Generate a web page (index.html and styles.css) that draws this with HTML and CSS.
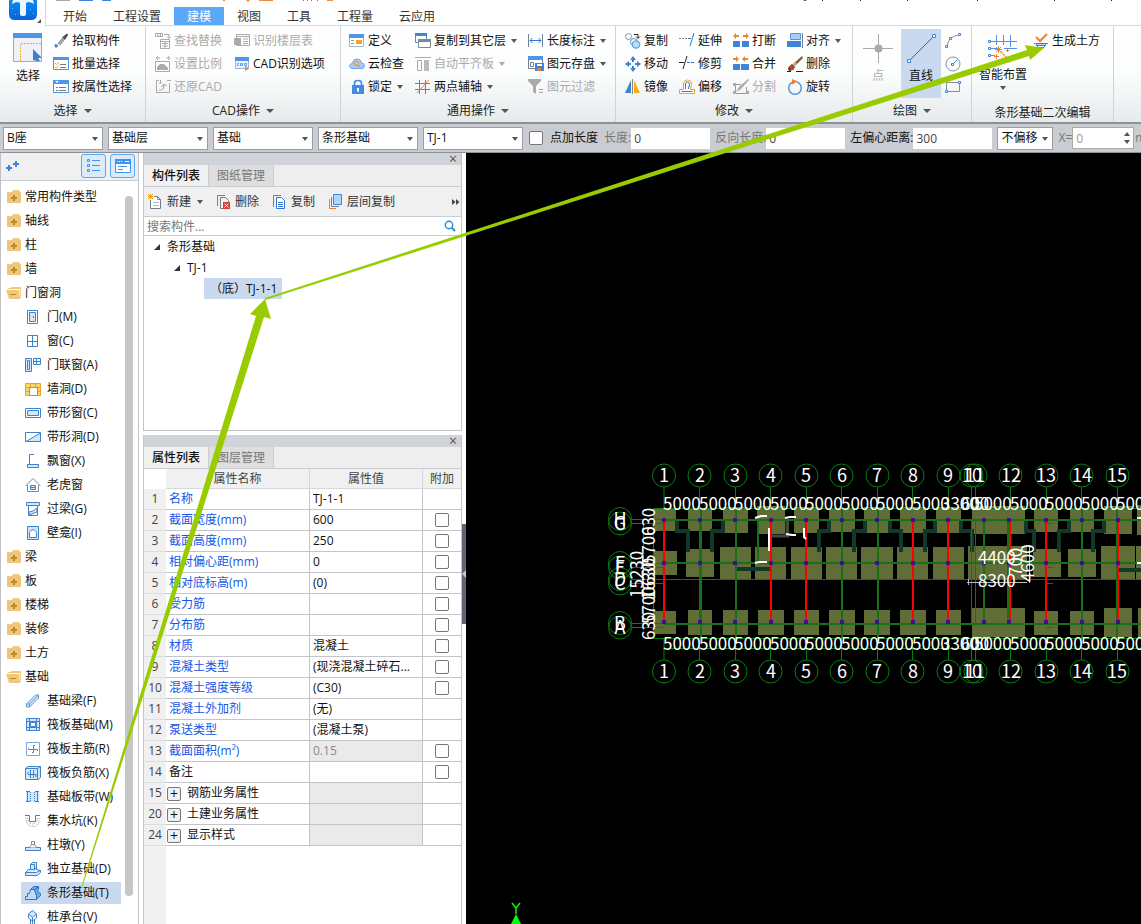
FILE: index.html
```html
<!DOCTYPE html>
<html lang="zh-CN">
<head>
<meta charset="utf-8">
<title>条形基础 - 建模</title>
<link rel="stylesheet" href="styles.css">
</head>
<body>
<svg class="defs" aria-hidden="true">
  <symbol id="folder" viewBox="0 0 16 14"><path fill="#f0c57c" d="M7 0h6v1H7zM1 2h14v11H1zM6 1h8v1H6z"/><path fill="#b98a34" d="M7 5h2v2h2v2H9v2H7V9H5V7h2z"/></symbol>
  <symbol id="folder-open" viewBox="0 0 16 14"><path fill="#f0c57c" d="M5 1h10v11h-1V3H5zM0 4h13l1 9H3z"/><path fill="#f0c57c" d="M2 2h12v1H2z"/><path fill="#b98a34" d="M4 8h6v1H4z"/></symbol>
</svg>

<header class="top">
  <div class="logo">
    <svg width="44" height="25" viewBox="0 0 44 25"><defs><linearGradient id="lg" x2="0" y2="1"><stop stop-color="#0b8cf0"/><stop offset="1" stop-color="#0a63d8"/></linearGradient></defs><path fill="url(#lg)" d="M9 0h28v14q0 6-6 6H15q-6 0-6-6z"/><path fill="#e8f6ff" d="M13 0h20l1 4q-3-2-6-2l-2 1v11q0 2-3 2t-3-2V3l-2-1q-3 0-6 2z"/><path fill="#6cc4ff" d="M12 8h1v1h-1zM30 9h1v1h-1zM33 13h1v1h-1zM15 14h1v1h-1z"/><path fill="#555" d="M41 19v4h-4z"/></svg>
  </div>
  <div class="top-main">
    <svg class="quick" width="1096" height="3" viewBox="45 0 1096 3"><path fill="#aaa" d="M55 0h14v1H55z"/><path fill="#3d86dc" d="M78 0h14v1H78zM101 0h9v1h-9zM302 0h1v1h-1zM306 0h1v1h-1zM310 0h1v1h-1zM316 0h1v1h-1z"/><path fill="#f08a3c" d="M222 0h2v1h-2zM245 0h4l-2 2zM258 0h14v1H258zM326 0h6v1h-6z"/><path fill="#302040" d="M802 0h4l-2 1zM821 0h1v1h-1zM859 0h1v1h-1zM906 0h1v1h-1zM976 0h1v1h-1zM1053 0h1v1h-1zM1110 0h1v1h-1z"/></svg>
    <nav class="tabs">
      <a href="#">开始</a><a href="#">工程设置</a><a href="#" class="on">建模</a><a href="#">视图</a><a href="#">工具</a><a href="#">工程量</a><a href="#">云应用</a>
    </nav>
  </div>
</header>

<section class="ribbon">
  <div class="group g-select">
    <div class="body">
      <button class="big"><svg width="32" height="32" viewBox="0 0 32 32"><path fill="#eef1f6" stroke="#94aed0" d="M1.500 2.500h28v27h-28z"/><path fill="#4f94e6" d="M1 1h29v5H1z"/><path fill="none" stroke="#f5b02a" stroke-dasharray="2 1" d="M8.500 29V11.500H29"/><path fill="#3a7fd2" d="M21 17l9 9h-4l2 3h-3l-4-1z"/></svg><span>选择</span></button>
      <div class="col">
        <button><svg viewBox="0 0 16 16"><path fill="#4a4a4a" d="M9 4l2-1 2-2q2-1 2 1l-2 3-1 2z"/><path fill="none" stroke="#8a8f95" stroke-width="1.300" d="M10 5l-5 6M11.500 6l-5 6"/><path fill="#3a7fd2" d="M2 11q4 1 3 2-2 3-3 1-1-1 0-3z"/></svg>拾取构件</button>
        <button><svg viewBox="0 0 16 16"><path fill="#fff" stroke="#5b8fcd" d="M.5 2.500h15v11H.5z"/><path fill="#4f94e6" d="M0 1h16v3H0z"/><path fill="none" stroke="#f0962e" d="M2 7l1.500 1.500L6 6M2 11l1.500 1L6 9.500"/><path stroke="#777" d="M7 8.500h6M7 11.500h6"/></svg>批量选择</button>
        <button><svg viewBox="0 0 16 16"><path fill="#fff" stroke="#5b8fcd" d="M.5 2.500h15v11H.5z"/><path fill="#4f94e6" d="M0 1h16v4H0z"/><path fill="#fff" d="M2 2h4L4 4z"/><path stroke="#777" d="M3 8.500h2M6 8.500h7M3 11.500h2M6 11.500h7"/></svg>按属性选择</button>
      </div>
    </div>
    <div class="cap">选择<i class="tri"></i></div>
  </div>

  <div class="group g-cad">
    <div class="body">
      <div class="col">
        <button disabled><svg viewBox="0 0 16 16"><path fill="none" stroke="#aaa" d="M.5.500h7v3h-7zM3 0v3M5.500 0v3M9 1.500h5V5M12 3.500l2 2 2-2M5.500 6.500h9v9h-9zM5 8.500h10M7 10.500h6M7 13h6M10 9v6"/></svg>查找替换</button>
        <button disabled><svg viewBox="0 0 16 16"><path fill="none" stroke="#aaa" d="M.5 5.500h14v10H.5zM1 2h4M11 2h4M3 0L1 2l2 2M13 0l2 2-2 2"/><path fill="#aaa" d="M2 14V11l3-3h4l4 4v2z"/></svg>设置比例</button>
        <button disabled><svg viewBox="0 0 16 16"><path fill="none" stroke="#aaa" d="M4 1.500H1.500V13.500H14.500V4M16 1.500H12M5.500 1v3M4 4h3M8.500 10V6M4 11q5 1 5-5M6 8l3-3 3 2"/></svg>还原CAD</button>
      </div>
      <div class="col">
        <button disabled><svg viewBox="0 0 16 16"><path fill="none" stroke="#aaa" d="M2.500 1.500h13v11h-13zM2.500 3.500h13M9 6h5M9 8.500h5M9 10.500h5"/><path fill="#aaa" d="M0 5h7v7H0z"/></svg>识别楼层表</button>
        <button><svg viewBox="0 0 16 16"><path fill="#eaf3ff" stroke="#8db9ee" d="M1.500 2.500h13v10h-13z"/><path fill="#4f94e6" d="M1 1h14v4H1z"/><path fill="none" stroke="#6a9fe0" d="M5 7.500H3.500v2H5M6.500 10V7.500h2V10M6 9h2M10.500 7v2.500h2v-2h-2"/><path fill="#f08a4c" d="M11 9l4 4-2 1-2 1z"/></svg>CAD识别选项</button>
      </div>
    </div>
    <div class="cap">CAD操作<i class="tri"></i></div>
  </div>

  <div class="group g-common">
    <div class="body">
      <div class="col">
        <button><svg viewBox="0 0 16 16"><path fill="#fff" stroke="#aeb4bc" d="M.5 1.500h14v12H.5z"/><path fill="#4f94e6" d="M0 1h15v4H0z"/><path fill="#f5a524" d="M7 7h6v4H7z"/><path stroke="#999" d="M2 7.500h3M2 10.500h3"/></svg>定义</button>
        <button><svg viewBox="0 0 16 16"><path fill="#a9ccf5" stroke="#6fa6e6" d="M3 12.500q-2.500-.5-2.500-3 .5-2 3-2Q4 3 8 3t4.500 4q3 0 3 3 0 2-2.500 2.500z"/><circle cx="7.500" cy="7.500" r="2" fill="#f7c7a5" stroke="#e08040"/><path stroke="#e08040" d="M9 9l2 2"/></svg>云检查</button>
        <button><svg viewBox="0 0 16 16"><path fill="#3f8be6" d="M3 6h12v9H3z"/><path fill="none" stroke="#3f8be6" stroke-width="1.600" d="M5.500 7V4q0-2.500 3.500-2.500T12.500 4v3"/><path fill="#fff" d="M8 9h2v2l-.5 2h-1L8 11z"/></svg>锁定<i class="tri"></i></button>
      </div>
      <div class="col">
        <button><svg viewBox="0 0 16 16"><path fill="#fff" stroke="#4f8fdc" d="M.5 1.500h11v8H.5z"/><path fill="#3f84d8" d="M0 0h12v3H0z"/><path fill="#fff" stroke="#7c8894" d="M3.500 6.500h12v8h-12z"/><path fill="#7c8894" d="M3 6h13v3H3z"/></svg>复制到其它层<i class="tri"></i></button>
        <button disabled><svg viewBox="0 0 16 16"><path fill="none" stroke="#aaa" d="M0 1.500h16M2.500 4.500h4v10h-4z"/><path fill="#bbb" d="M9 4h5v11H9z"/></svg>自动平齐板<i class="tri"></i></button>
        <button><svg viewBox="0 0 16 16"><path fill="none" stroke="#70808f" d="M4.500 1v14M10.500 1v14M0 4.500h15M0 10.500h15"/><path stroke="#ee7f31" d="M2 14L14 1"/></svg>两点辅轴<i class="tri"></i></button>
      </div>
      <div class="col">
        <button><svg viewBox="0 0 16 16"><path fill="none" stroke="#70808f" d="M.5 1v13M14.500 1v13"/><path fill="none" stroke="#2f76d2" d="M2 7.500h11M4.500 5L2 7.500 4.500 10M10.500 5L13 7.500 10.500 10"/></svg>长度标注<i class="tri"></i></button>
        <button><svg viewBox="0 0 16 16"><path fill="#fff" stroke="#70808f" d="M.5 1.500h14v11H.5z"/><path fill="#4f94e6" d="M0 0h15v4H0z"/><path fill="none" stroke="#70808f" d="M2.500 6.500h3v4h-3z"/><path fill="#3f84d8" d="M7 7h9v8H7z"/><path fill="#fff" d="M9 8h5v2H9z"/><path fill="#ee7f31" d="M9 12h4v3H9z"/></svg>图元存盘<i class="tri"></i></button>
        <button disabled><svg viewBox="0 0 16 16"><path fill="#aaa" d="M0 0h13v2L8 7v8l-3-2V7L0 2zM11 10h4v1h-4zM11 13h4v1h-4z"/></svg>图元过滤</button>
      </div>
    </div>
    <div class="cap">通用操作<i class="tri"></i></div>
  </div>

  <div class="group g-edit">
    <div class="body">
      <div class="col">
        <button><svg viewBox="0 0 16 16"><circle cx="3.500" cy="3.500" r="3" fill="#fff" stroke="#8a9096"/><circle cx="9" cy="9" r="3.500" fill="#fff" stroke="#4f94d8"/><circle cx="11" cy="11.500" r="3.800" fill="#b9dbfa" stroke="#4f94d8"/><path fill="none" stroke="#222" d="M9 1.500h4V5M11 3.500l2 2 2-2"/></svg>复制</button>
        <button><svg viewBox="0 0 16 16"><path fill="#3c83d4" d="M8 0l3 4H9v2H7V4H5zM8 16l3-4H9v-2H7v2H5zM0 8l4-3v2h2v2H4v2zM16 8l-4-3v2h-2v2h2v2z"/></svg>移动</button>
        <button><svg viewBox="0 0 16 16"><path fill="#3c83d4" d="M6 1v13H0z"/><path fill="#f7ab1b" d="M9 1v13h6z"/><path stroke="#888" d="M7.500 0v15"/></svg>镜像</button>
      </div>
      <div class="col">
        <button><svg viewBox="0 0 16 16"><path fill="none" stroke="#70808f" stroke-dasharray="2 1" d="M0 5.500h10"/><path fill="none" stroke="#2f76d2" d="M15 0l-4 13M10 5.500h2"/></svg>延伸</button>
        <button><svg viewBox="0 0 16 16"><path fill="none" stroke="#222" d="M0 6.500h5M8 0L4 13"/><path stroke="#2f76d2" stroke-dasharray="3 1" d="M8 6.500h8"/></svg>修剪</button>
        <button><svg viewBox="0 0 16 16"><path fill="#fff" stroke="#f2a11f" d="M.5 14.500v-4h4V5q0-4 4-4t4 4l-1 5.500h4v4z"/><path fill="none" stroke="#2f76d2" d="M2.500 12.500h11M6.500 10V5q0-2 2-2t2 2l-1 5"/></svg>偏移</button>
      </div>
      <div class="col">
        <button><svg viewBox="0 0 16 16"><path fill="#3f84d8" d="M0 8h7v6H0zM9 8h7v6H9z"/><path fill="#e8872c" d="M0 3l3-3v2h3v2H3v2zM16 3l-3-3v2h-3v2h3v2z"/></svg>打断</button>
        <button><svg viewBox="0 0 16 16"><path fill="#3f84d8" d="M0 8h7v6H0zM8 8h8v6H8z"/><path fill="#e8872c" d="M6 3L3 0v2H0v2h3v2zM9 3l3-3v2h3v2h-3v2z"/></svg>合并</button>
        <button disabled><svg viewBox="0 0 16 16"><path fill="none" stroke="#999" d="M2 5.500h6M1.500 14.500h13M13.500 8v6M2.500 6v8"/><path fill="#aaa" d="M15 0l1 1-8 9-5 3 3-5zM0 4h3v3H0zM0 12h3v3H0zM13 12h3v3h-3z"/></svg>分割</button>
      </div>
      <div class="col">
        <button><svg viewBox="0 0 16 16"><path fill="#a9ccf8" stroke="#4f94e6" d="M3.500.500h10v6h-10z"/><path fill="#3f84d8" d="M0 8h14v6H0z"/><path stroke="#70808f" d="M15.500 0v15"/></svg>对齐<i class="tri"></i></button>
        <button><svg viewBox="0 0 16 16"><path fill="#8a5a38" d="M15 0l1 2-8 8-2-2z"/><path fill="#c9b38e" d="M8 6l2 2-2 2-2-2z"/><path fill="#222" d="M5 8l3 3-2 3-4 1-1-3z"/><circle cx="4.500" cy="11.500" r="2.500" fill="#cf3f1b"/><path stroke="#222" d="M0 15.500h4M9 15.500h7"/></svg>删除</button>
        <button><svg viewBox="0 0 16 16"><circle cx="8" cy="9" r="6.300" fill="none" stroke="#4f8fdc" stroke-width="1.400"/><path fill="#fff" d="M5 0h5v4H5z"/><path fill="#ee7f31" d="M5 0l6 2.500-6 3z"/></svg>旋转</button>
      </div>
    </div>
    <div class="cap">修改<i class="tri"></i></div>
  </div>

  <div class="group g-draw">
    <div class="body">
      <button class="big" disabled><svg width="32" height="32" viewBox="0 0 32 32"><path stroke="#aaa" d="M1 16.500h30M16.500 2v29"/><circle cx="16.500" cy="16.500" r="4" fill="#aaa"/></svg><span>点</span></button>
      <button class="big pressed"><svg width="32" height="32" viewBox="0 0 32 32"><path stroke="#555d66" d="M4 29L29 4"/><path fill="#fff" stroke="#3f84d8" d="M2.500 27.500h3v3h-3zM27.500 2.500h3v3h-3z"/></svg><span>直线</span></button>
      <div class="col icons">
        <button aria-label="弧线"><svg viewBox="0 0 16 16"><path fill="none" stroke="#8a9096" d="M2 14Q3 3 14 2"/><path fill="#fff" stroke="#3f84d8" d="M.5 12.500h2v2h-2zM13.500.500h2v2h-2zM4.500 4.500h2v2h-2z"/></svg></button>
        <button aria-label="圆"><svg viewBox="0 0 16 16"><circle cx="8" cy="8" r="7" fill="none" stroke="#8a9096"/><path stroke="#3f84d8" d="M8 8l4-4"/><path fill="#fff" stroke="#3f84d8" d="M6.500 7.500h2v2h-2z"/></svg></button>
        <button aria-label="矩形"><svg viewBox="0 0 16 16"><path fill="none" stroke="#8a9096" d="M1.500 3.500h13v9h-13z"/><path fill="#fff" stroke="#3f84d8" d="M.5 11.500h2v2h-2zM13.500 2.500h2v2h-2z"/></svg></button>
      </div>
    </div>
    <div class="cap">绘图<i class="tri"></i></div>
  </div>

  <div class="group g-second">
    <div class="body">
      <button class="big wide"><svg width="32" height="32" viewBox="0 0 32 32"><path fill="none" stroke="#4f94e6" d="M3 9.500h27M3 16.500h7M17 16.500h13M3 23.500h5M9.500 3v10M16.500 3v10M23.500 3v12"/><path fill="#fff" stroke="#3f84d8" d="M1.500 8.500h2v2h-2zM1.500 15.500h2v2h-2zM1.500 22.500h2v2h-2z"/><path stroke="#ee7f31" d="M9 15l5 5M14 15l-5 5M11.500 14v7M8 17.500h7M9.500 22v5M7 24.500h5M20.500 17v3M19 18.500h3"/><path stroke="#f0a060" stroke-width="2" stroke-dasharray="2 1" d="M14 20l10 10"/></svg><span>智能布置</span><i class="tri"></i></button>
      <div class="col">
        <button><svg viewBox="0 0 16 16"><path fill="none" stroke="#ee7f31" stroke-width="2" d="M3 4l4 4 7-7"/><path fill="#c8d8e8" stroke="#60707e" d="M3.500 10.500h9v2h-9z"/><path fill="none" stroke="#3f84d8" d="M1 10.500h2l2 4h6l2-4h2"/></svg>生成土方</button>
      </div>
    </div>
    <div class="cap low">条形基础二次编辑</div>
  </div>
</section>

<form class="options">
  <span class="sel"><select aria-label="楼栋"><option>B座</option></select></span>
  <span class="sel"><select aria-label="楼层"><option>基础层</option></select></span>
  <span class="sel"><select aria-label="类别"><option>基础</option></select></span>
  <span class="sel"><select aria-label="构件类型"><option>条形基础</option></select></span>
  <span class="sel"><select aria-label="构件"><option>TJ-1</option></select></span>
  <label class="chk"><input type="checkbox">点加长度</label>
  <label class="field dim">长度:<input type="text" value="0"></label>
  <label class="field dim">反向长度:<input type="text" value="0"></label>
  <label class="field">左偏心距离:<input type="text" value="300"></label>
  <span class="sel short"><select aria-label="偏移方式"><option>不偏移</option></select></span>
  <label class="field spin dim">X=<input type="text" value="0" disabled><span class="arrows"></span></label>
  <span class="unit">mm</span>
</form>

<main class="work">
  <aside class="palette">
    <div class="palette-bar">
      <button class="plus" aria-label="添加"><svg width="14" height="14" viewBox="0 0 14 14"><path fill="#3f84d8" d="M2 6h2v2h2v2H4v2H2v-2H0V8h2zM9 2h2v2h2v2h-2v2H9V6H7V4h2z"/></svg></button>
      <button class="view" aria-label="列表视图"><svg width="14" height="14" viewBox="0 0 14 14"><path fill="none" stroke="#3f94f0" d="M.5.500h2v2h-2zM.5 5.500h2v2h-2zM.5 10.500h2v2h-2zM5 1.500h8M5 6.500h8M5 11.500h8"/></svg></button>
      <button class="view" aria-label="图标视图"><svg width="16" height="14" viewBox="0 0 16 14"><path fill="#fff" stroke="#3f94f0" d="M.5.500h15v13H.5z"/><path fill="#3f94f0" d="M0 0h16v5H0z"/><path stroke="#fff" d="M2 2.500h1M4 2.500h1M6 2.500h1M10 2.500h4"/><path stroke="#3f94f0" d="M3 7.500h9M3 10.500h5"/></svg></button>
    </div>
    <div class="palette-body">
      <ul class="tree">
        <li><svg><use href="#folder"/></svg>常用构件类型</li>
        <li><svg><use href="#folder"/></svg>轴线</li>
        <li><svg><use href="#folder"/></svg>柱</li>
        <li><svg><use href="#folder"/></svg>墙</li>
        <li><svg><use href="#folder-open"/></svg>门窗洞</li>
        <li class="sub"><svg viewBox="0 0 16 16"><path fill="#fff" stroke="#3c83cd" d="M2.500 1.500h10v13h-10z"/><path fill="#d5e6f8" stroke="#3c83cd" d="M4.500 3.500h6v9h-6z"/><path stroke="#3c83cd" d="M8.500 7v2"/></svg>门(M)</li>
        <li class="sub"><svg viewBox="0 0 16 16"><path fill="#fff" stroke="#3c83cd" d="M2.500 2.500h10v11h-10zM7.500 2v12M2 8.500h11"/></svg>窗(C)</li>
        <li class="sub"><svg viewBox="0 0 16 16"><path fill="#d5e6f8" stroke="#3c83cd" d="M.5 1.500h6v13h-6z"/><path fill="#fff" stroke="#3c83cd" d="M8.500 1.500h7v6h-7zM11.500 1v7M8 4.500h8"/><path fill="none" stroke="#3c83cd" d="M2.500 3.500h2v9h-2z"/></svg>门联窗(A)</li>
        <li class="sub"><svg viewBox="0 0 16 16"><path fill="#fcd66c" stroke="#f2a11f" d="M.5 2.500h15v12H.5zM0 6.500h16M5.500 2v4M10.500 2v4M0 10.500h16"/><path fill="#fff" stroke="#ec7c2d" d="M4.500 6.500h8v8h-8z"/></svg>墙洞(D)</li>
        <li class="sub"><svg viewBox="0 0 16 16"><path fill="#fff" stroke="#3c83cd" d="M.5 3.500h15v9H.5z"/><path fill="#d5e6f8" stroke="#3c83cd" d="M2.500 5.500h11v5h-11z"/></svg>带形窗(C)</li>
        <li class="sub"><svg viewBox="0 0 16 16"><path fill="#fff" stroke="#3c83cd" d="M.5 3.500h15v9H.5z"/><path fill="#d5e6f8" stroke="#3c83cd" d="M1 12.500L15.500 4v8.500z"/></svg>带形洞(D)</li>
        <li class="sub"><svg viewBox="0 0 16 16"><path fill="#d5e6f8" stroke="#3c83cd" d="M2.500 11.500h11v3h-11z"/><path fill="none" stroke="#3c83cd" d="M9 1.500H4.500v10"/></svg>飘窗(X)</li>
        <li class="sub"><svg viewBox="0 0 16 16"><path fill="none" stroke="#7f8b96" d="M.5 9L8 1.500 15.500 9M2.500 8v6.500h11V8"/><path fill="#d5e6f8" stroke="#3c83cd" d="M5.500 8.500h5v4h-5zM5 10.500h6"/></svg>老虎窗</li>
        <li class="sub"><svg viewBox="0 0 16 16"><path fill="#d5e6f8" stroke="#3c83cd" d="M1.500 1.500h13v3h-13z"/><path fill="#fff" stroke="#3c83cd" d="M3.500 4.500h9v10h-9z"/><path fill="#d5e6f8" stroke="#3c83cd" d="M4 11l4-1 4-3v4l-8 3z"/></svg>过梁(G)</li>
        <li class="sub"><svg viewBox="0 0 16 16"><path fill="#d5e6f8" stroke="#3c83cd" d="M2.500 1.500h11v13h-11z"/><path fill="#fff" stroke="#3c83cd" d="M4.500 12.500V7.500q3.500-6 7 0v5z"/></svg>壁龛(I)</li>
        <li><svg><use href="#folder"/></svg>梁</li>
        <li><svg><use href="#folder"/></svg>板</li>
        <li><svg><use href="#folder"/></svg>楼梯</li>
        <li><svg><use href="#folder"/></svg>装修</li>
        <li><svg><use href="#folder"/></svg>土方</li>
        <li><svg><use href="#folder-open"/></svg>基础</li>
        <li class="sub"><svg viewBox="0 0 16 16"><path fill="#d5e6f8" stroke="#5b97db" d="M1.500 11l9-9h3v3l-9 9h-3zM1.500 11h3v3M4.500 11l9-9"/></svg>基础梁(F)</li>
        <li class="sub"><svg viewBox="0 0 16 16"><path fill="#d5e6f8" stroke="#3c83cd" d="M1.500 1.500h13v12h-13zM1 4.500h14M1 10.500h14M4.500 1v13M11.500 1v13"/><path fill="#fff" stroke="#3c83cd" d="M5.500 5.500h5v4h-5z"/></svg>筏板基础(M)</li>
        <li class="sub"><svg viewBox="0 0 16 16"><path fill="#fff" stroke="#7aa7dc" d="M1.500 1.500h13v13h-13z"/><path fill="none" stroke="#70808f" d="M10 4.500H8.500v7H7M3.500 7v1.500h9V10"/></svg>筏板主筋(R)</li>
        <li class="sub"><svg viewBox="0 0 16 16"><path fill="#d5e6f8" stroke="#3c83cd" d="M.5 3.500l2-2h13v11l-2 2H.5z"/><path fill="none" stroke="#3c83cd" d="M.5 3.500h12v11M5.500 5v8M8.500 5v8M3 9.500h8M3 7v2M11 9v3M12.500 3.500l3-2"/></svg>筏板负筋(X)</li>
        <li class="sub"><svg viewBox="0 0 16 16"><path fill="#d5e6f8" d="M1 3h13v10H1z"/><path fill="none" stroke="#3c83cd" d="M1 2.500h4M10 2.500h4M1 12.500h4M10 12.500h4M2.500 3v10M12.500 3v10"/><path stroke="#3c83cd" stroke-dasharray="1 1" d="M5.500 3v10M9.500 3v10"/></svg>基础板带(W)</li>
        <li class="sub"><svg viewBox="0 0 16 16"><path fill="none" stroke="#3c83cd" d="M0 2.500h4.500v6h6v-6H15"/><path fill="none" stroke="#8a98a5" stroke-dasharray="1 1" d="M1 4.500q0 9 7 9t6-9M2.500 5q1 6 5 6t5-6"/></svg>集水坑(K)</li>
        <li class="sub"><svg viewBox="0 0 16 16"><path fill="#d5e6f8" stroke="#3c83cd" d="M.5 10.500h15v3H.5z"/><path fill="#fff" stroke="#7f8b96" d="M4.500 10.500l2-3h3l2 3M6.500 4.500h3v3h-3z"/></svg>柱墩(Y)</li>
        <li class="sub"><svg viewBox="0 0 16 16"><path fill="#d5e6f8" stroke="#3c83cd" d="M.5 11.500l3-3h2v-5l2-2h4v7l4 1v2l-3 3H.5zM.5 11.500h11l4-2M5.500 8.500h4l2-2M5.500 3.500h4v5"/></svg>独立基础(D)</li>
        <li class="sub on"><svg viewBox="0 0 16 16"><path fill="#c3d9f4" stroke="#2f76c8" d="M.5 14.500v-3h2v-3h2l1-4h4l2 6v4z"/><path fill="#6fa8e8" stroke="#2f76c8" d="M5.500 4.500l3-3h5l-4 3zM9.500 4.500l4-3v3l-1 2 3 2v2l-4 4v-4z"/></svg>条形基础(T)</li>
        <li class="sub"><svg viewBox="0 0 16 16"><path fill="#d5e6f8" stroke="#3c83cd" d="M7.500 1.500l4 3.500-4 3.500-4-3.500z"/><path fill="none" stroke="#3c83cd" d="M3.500 5v4l4 3 4-3V5M7.500 8v8M5.500 11v4M9.500 11v4"/></svg>桩承台(V)</li>
      </ul>
      <div class="scroll"></div>
    </div>
  </aside>

  <div class="docks">
    <section class="dock list">
      <div class="grip"><button aria-label="关闭">×</button></div>
      <div class="dock-tabs"><button class="on">构件列表</button><button>图纸管理</button></div>
      <div class="tools">
        <button><svg viewBox="0 0 16 16"><path fill="#fff" stroke="#70808f" d="M2.500 6v8.500h10v-9l-3-3H6"/><path fill="none" stroke="#70808f" d="M9.500 2.500v3h3"/><path stroke="#b8bec5" d="M5 8.500h6M5 11.500h6"/><path stroke="#f2a11f" d="M0 0l5 5M5 0L0 5M2.500 0v5M0 2.500h5"/></svg>新建<i class="tri"></i></button>
        <button><svg viewBox="0 0 16 16"><path fill="none" stroke="#70808f" d="M1.500 12V1.500H9M7 14.500H4.500v-11h5l3 3V8"/><path fill="#d23c3c" d="M7 8h7v7H7z"/><path stroke="#fff" d="M8.500 9.500l4 4M12.500 9.500l-4 4"/></svg>删除</button>
        <button><svg viewBox="0 0 16 16"><path fill="none" stroke="#70808f" d="M1.500 13V1.500H9"/><path fill="#fff" stroke="#2f76d2" d="M4.500 3.500h5l3 3v8h-8z"/><path stroke="#2f76d2" d="M6 8.500h5M6 10.500h5M6 12.500h5"/></svg>复制</button>
        <button><svg viewBox="0 0 16 16"><path fill="none" stroke="#ee7f31" d="M1.500 5v9.500H8"/><path fill="none" stroke="#70808f" d="M3.500 3v9.500H11"/><path fill="#b3d5fb" stroke="#3f84d8" d="M5.500.500h8v10h-8z"/></svg>层间复制</button>
        <button class="more" aria-label="更多"><svg viewBox="0 0 8 8"><path fill="#444" d="M0 1l3.500 3L0 7zM4 1l3.500 3L4 7z"/></svg></button>
      </div>
      <label class="search"><input type="text" placeholder="搜索构件..." aria-label="搜索构件"><svg viewBox="0 0 12 12"><circle cx="5" cy="5" r="3.700" fill="none" stroke="#2389cf" stroke-width="1.400"/><path stroke="#2389cf" stroke-width="2" d="M8 8l3 3"/></svg></label>
      <ul class="items">
        <li class="l1"><i class="open"></i>条形基础</li>
        <li class="l2"><i class="open"></i>TJ-1</li>
        <li class="l3"><span>（底）TJ-1-1</span></li>
      </ul>
    </section>

    <section class="dock props">
      <div class="grip"><button aria-label="关闭">×</button></div>
      <div class="dock-tabs"><button class="on">属性列表</button><button>图层管理</button></div>
      <table>
        <colgroup><col class="c-no"><col class="c-name"><col><col class="c-add"></colgroup>
        <thead><tr><th class="corner"></th><th>属性名称</th><th>属性值</th><th>附加</th></tr></thead>
        <tbody>
          <tr><th>1</th><td class="k">名称</td><td>TJ-1-1</td><td></td></tr>
          <tr><th>2</th><td class="k">截面宽度(mm)</td><td>600</td><td class="a"><input type="checkbox" aria-label="附加 截面宽度"></td></tr>
          <tr><th>3</th><td class="k">截面高度(mm)</td><td>250</td><td class="a"><input type="checkbox" aria-label="附加 截面高度"></td></tr>
          <tr><th>4</th><td class="k">相对偏心距(mm)</td><td>0</td><td class="a"><input type="checkbox" aria-label="附加 相对偏心距"></td></tr>
          <tr><th>5</th><td class="k">相对底标高(m)</td><td>(0)</td><td class="a"><input type="checkbox" aria-label="附加 相对底标高"></td></tr>
          <tr><th>6</th><td class="k">受力筋</td><td></td><td class="a"><input type="checkbox" aria-label="附加 受力筋"></td></tr>
          <tr><th>7</th><td class="k">分布筋</td><td></td><td class="a"><input type="checkbox" aria-label="附加 分布筋"></td></tr>
          <tr><th>8</th><td class="k">材质</td><td>混凝土</td><td class="a"><input type="checkbox" aria-label="附加 材质"></td></tr>
          <tr><th>9</th><td class="k">混凝土类型</td><td>(现浇混凝土碎石...</td><td class="a"><input type="checkbox" aria-label="附加 混凝土类型"></td></tr>
          <tr><th>10</th><td class="k">混凝土强度等级</td><td>(C30)</td><td class="a"><input type="checkbox" aria-label="附加 混凝土强度等级"></td></tr>
          <tr><th>11</th><td class="k">混凝土外加剂</td><td>(无)</td><td></td></tr>
          <tr><th>12</th><td class="k">泵送类型</td><td>(混凝土泵)</td><td></td></tr>
          <tr><th>13</th><td class="k">截面面积(m²)</td><td class="ro">0.15</td><td class="a"><input type="checkbox" aria-label="附加 截面面积"></td></tr>
          <tr><th>14</th><td>备注</td><td></td><td class="a"><input type="checkbox" aria-label="附加 备注"></td></tr>
          <tr><th>15</th><td class="x"><button aria-label="展开">+</button>钢筋业务属性</td><td class="ro"></td><td></td></tr>
          <tr><th>20</th><td class="x"><button aria-label="展开">+</button>土建业务属性</td><td class="ro"></td><td></td></tr>
          <tr><th>24</th><td class="x"><button aria-label="展开">+</button>显示样式</td><td class="ro"></td><td></td></tr>
        </tbody>
      </table>
      <div class="rest"></div>
    </section>
  </div>

  <div class="splitter"><button aria-label="收起"><svg viewBox="0 0 4 8"><path fill="#c4cad1" d="M4 0v8L0 4z"/></svg></button></div>

  <div class="canvas">
    <svg width="675" height="771" viewBox="466 153 675 771">
      <defs>
        <g id="ax"><circle cy="475.500" r="11.500"/><circle cy="671.500" r="11.500"/><path d="M0 487v21M0 638v22"/></g>
        <path id="v" d="M-2 520h4M-2 563h4M-2 622h4" stroke="#3d1090" stroke-width="4"/>
      </defs>
      <path fill="#616d37" d="M653 509h23v22h-23zM688 509h24v22h-24zM723 507h25v26h-25zM757 506h28v28h-28zM794 507h25v26h-25zM829 508h26v24h-26zM864 507h26v26h-26zM900 507h26v26h-26zM936 507h25v26h-25zM972 506h53v28h-53zM1034 508h24v24h-24zM1070 508h24v24h-24zM1104 506h28v28h-28zM1137 505h4v30h-4z
        M653 551h24v24h-24zM686 549h28v28h-28zM720 547h31v32h-31zM755 547h31v32h-31zM791 547h31v32h-31zM826 547h31v32h-31zM861 547h32v32h-32zM897 547h31v32h-31zM933 547h31v32h-31zM968 546h59v33h-59zM1033 549h28v28h-28zM1068 549h28v28h-28zM1101 546h34v33h-34zM1136 546h5v33h-5z
        M653 611h23v23h-23zM688 610h24v25h-24zM723 610h25v25h-25zM758 610h26v25h-26zM794 610h25v25h-25zM829 610h26v25h-26zM864 610h26v25h-26zM900 610h26v25h-26zM936 610h25v25h-25zM972 608h53v29h-53zM1034 611h24v24h-24zM1070 611h24v24h-24zM1104 608h28v29h-28zM1138 608h3v29h-3z"/>
      <path fill="none" stroke="#12382a" stroke-width="4" d="M677 520v11h11v21M723 520v11h-11v21M829 520v11h-10v21M865 520v11h-11v21M890 520v11h11v21M935 520v11h-10v21M961 520v11h11v21M1026 520v11h8v21M1069 520v11h-10v21M1104 520v11h-11v21M736 569h34M1117 570h24"/>
      <g fill="none" stroke="#0a7d12">
        <use href="#ax" x="664"/><use href="#ax" x="699.500"/><use href="#ax" x="735.500"/><use href="#ax" x="770.500"/><use href="#ax" x="806.500"/><use href="#ax" x="841.500"/><use href="#ax" x="877.500"/><use href="#ax" x="912.500"/><use href="#ax" x="948.500"/><use href="#ax" x="971.500"/><use href="#ax" x="975.500"/><use href="#ax" x="1010.500"/><use href="#ax" x="1046.500"/><use href="#ax" x="1081.500"/><use href="#ax" x="1117.500"/>
        <circle cx="620" cy="519" r="11.500"/><circle cx="620" cy="523.500" r="11.500"/><circle cx="620" cy="563" r="11.500"/><circle cx="620" cy="567.500" r="11.500"/><circle cx="620" cy="579" r="11.500"/><circle cx="620" cy="583.500" r="11.500"/><circle cx="620" cy="623" r="11.500"/><circle cx="620" cy="627.500" r="11.500"/>
      </g>
      <g class="crisp">
        <path stroke="#0a7d12" d="M632 519.500h32M632 523.500h32M632 563.500h32M632 567.500h32M632 579.500h32M632 583.500h32M632 623.500h32M632 627.500h32M643.500 519v108M653.500 508v130M653 508.500h488M653 638.500h488M664 648.500h477"/>
        <path stroke="#177017" d="M664 520.500h477M664 562.500h477M664 624.500h477"/>
        <path stroke="#177017" stroke-width="2" d="M701 508v130M736 508v130M842 508v130M878 508v130M1082 508v130M1117 508v130M758 520v42M788 520v14M984 520v102M1008 520v102"/>
        <path stroke="#f00" d="M699.500 519v104M735.500 519v104M841.500 519v104M877.500 519v104M971.500 519v104M975.500 519v104M1081.500 519v104M1118.500 519v104M664 579.500h477M1046 523.500h7M1046 567.500h7M1046 583.500h7M1046 627.500h7M664 519.500h477M664 563.500h477M664 623.500h477"/>
        <path stroke="#f00" stroke-width="2" d="M664 518v106M771 518v106M806 518v106M913 518v106M948 518v106M1010 518v106M1046 518v106"/>
      </g>
      <use href="#v" x="664"/><use href="#v" x="700"/><use href="#v" x="735"/><use href="#v" x="771"/><use href="#v" x="806"/><use href="#v" x="842"/><use href="#v" x="877"/><use href="#v" x="913"/><use href="#v" x="948"/><use href="#v" x="984"/><use href="#v" x="1009"/><use href="#v" x="1046"/><use href="#v" x="1082"/><use href="#v" x="1118"/>
      <path stroke="#4a4444" stroke-width="3" d="M787 519v17M771 536h18"/>
      <path fill="none" stroke="#fff" stroke-width="2" d="M755 518l6-2h6M785 518l5-1h6M769 528v23M786 534l6 1h4M804 528v9l2 2M755 563l4-1h8M1137 518h4M1137 563h4"/>
      <path fill="none" stroke="#bbb" d="M967 582.500h60M968.500 579v6M978 559.500h44M1029.500 545v38"/>
      <g class="cad bub">
        <text x="664" y="482">1</text><text x="700" y="482">2</text><text x="735" y="482">3</text><text x="771" y="482">4</text><text x="806" y="482">5</text><text x="842" y="482">6</text><text x="877" y="482">7</text><text x="913" y="482">8</text><text x="948" y="482">9</text><text x="972" y="482">10</text><text x="975" y="482">11</text><text x="1011" y="482">12</text><text x="1046" y="482">13</text><text x="1082" y="482">14</text><text x="1117" y="482">15</text>
        <text x="664" y="678">1</text><text x="700" y="678">2</text><text x="735" y="678">3</text><text x="771" y="678">4</text><text x="806" y="678">5</text><text x="842" y="678">6</text><text x="877" y="678">7</text><text x="913" y="678">8</text><text x="948" y="678">9</text><text x="972" y="678">10</text><text x="975" y="678">11</text><text x="1011" y="678">12</text><text x="1046" y="678">13</text><text x="1082" y="678">14</text><text x="1117" y="678">15</text>
        <text x="620" y="526">H</text><text x="620" y="530">G</text><text x="620" y="570">F</text><text x="620" y="574">E</text><text x="620" y="586">D</text><text x="620" y="590">C</text><text x="620" y="630">B</text><text x="620" y="634">A</text>
      </g>
      <g class="cad">
        <text x="663" y="510">5000</text><text x="699" y="510">5000</text><text x="734" y="510">5000</text><text x="770" y="510">5000</text><text x="805" y="510">5000</text><text x="841" y="510">5000</text><text x="876" y="510">5000</text><text x="912" y="510">5000</text><text x="941" y="510">3300</text><text x="961" y="510">600</text><text x="974" y="510">5000</text><text x="1010" y="510">5000</text><text x="1045" y="510">5000</text><text x="1081" y="510">5000</text><text x="1116" y="510">5000</text>
        <text x="663" y="650">5000</text><text x="699" y="650">5000</text><text x="734" y="650">5000</text><text x="770" y="650">5000</text><text x="805" y="650">5000</text><text x="841" y="650">5000</text><text x="876" y="650">5000</text><text x="912" y="650">5000</text><text x="941" y="650">3300</text><text x="961" y="650">600</text><text x="974" y="650">5000</text><text x="1010" y="650">5000</text><text x="1045" y="650">5000</text><text x="1081" y="650">5000</text><text x="1116" y="650">5000</text>
        <text x="978" y="564">4400</text><text x="978" y="587">8300</text>
        <text transform="translate(1022 576) rotate(-90)">700</text><text transform="translate(1034 582) rotate(-90)">4600</text>
        <text transform="translate(643 598) rotate(-90)">15230</text>
        <text transform="translate(655 640) rotate(-90)">630</text><text transform="translate(655 624) rotate(-90)">5700</text><text transform="translate(655 600) rotate(-90)">1630</text><text transform="translate(655 586) rotate(-90)">630</text><text transform="translate(655 564) rotate(-90)">5700</text><text transform="translate(655 536) rotate(-90)">630</text>
      </g>
      <path fill="none" stroke="#0f0" stroke-width="1.500" d="M512 903l4 5 4-5M516 908v6"/><path fill="#0f0" d="M516 914l5 10h-10z"/>
    </svg>
  </div>
</main>

<svg class="arrows-layer" width="1141" height="924" viewBox="0 0 1141 924" aria-hidden="true"><g fill="#9c0"><path d="M81 888L256 316l-6-2 15-15 6 20-7-2L82 888z"/><path d="M265 298L1027 50l-2-5 19 3-14 12-1-4L265 300z"/></g></svg>
</body>
</html>
```

FILE: styles.css
```css
* { box-sizing: border-box; }
html, body { height: 100%; }
body {
  margin: 0;
  display: flex;
  flex-direction: column;
  overflow: hidden;
  position: relative;
  background: #fff;
  color: #111;
  font: 12px/16px "Open Sans", "Noto Sans CJK SC", sans-serif;
}
button, input, select { font: inherit; color: inherit; margin: 0; }
button { border: 0; padding: 0; background: none; white-space: nowrap; }
ul { list-style: none; margin: 0; padding: 0; }
svg { flex: none; display: block; }
.defs { position: absolute; width: 0; height: 0; }
.tri {
  width: 0;
  height: 0;
  border: 3px solid transparent;
  border-top: 4px solid #555;
  border-bottom: 0;
}

/* title strip and tabs */
.top { display: flex; height: 26px; flex: none; }
.logo { width: 46px; border-right: 1px solid #d5d8dc; }
.top-main {
  flex: 1;
  min-width: 0;
  display: flex;
  flex-direction: column;
  justify-content: space-between;
  border-bottom: 1px solid #d5d8dc;
  overflow: hidden;
}
.tabs { display: flex; padding-left: 4px; }
.tabs a { padding: 2px 13px 0; height: 18px; color: #333; text-decoration: none; }
.tabs .on { background: #5aa8f6; color: #fff; }

/* ribbon */
.ribbon {
  display: flex;
  flex: none;
  height: 98px;
  background: linear-gradient(#fff, #fcfdfd 50%, #e6eaeb);
  border-bottom: 2px solid #8e9297;
}
.group {
  flex: none;
  display: flex;
  flex-direction: column;
  border-right: 1px solid #d0d3d6;
  padding-top: 3px;
}
.body { display: flex; height: 69px; }
.col { display: flex; flex-direction: column; flex: none; }
.col button { display: flex; align-items: center; gap: 3px; height: 23px; }
.col svg { width: 16px; height: 16px; }
.col .tri { margin-left: 2px; }
button:disabled { color: #aaa; }
button:disabled .tri { border-top-color: #aaa; }
.cap { display: flex; align-items: center; justify-content: center; gap: 6px; height: 24px; padding-top: 2px; color: #222; }
.cap.low { padding-top: 6px; }
.cap .tri { border-width: 4px 4px 0; }
.big { display: flex; flex-direction: column; align-items: center; gap: 4px; padding-top: 3px; width: 40px; }
.big.wide { width: 50px; gap: 3px; }
.pressed { background: #c9d9ef; }
.g-select { width: 146px; }
.g-select .body { padding-left: 8px; gap: 5px; }
.g-cad { width: 195px; }
.g-cad .body { padding-left: 9px; gap: 12px; }
.g-common { width: 275px; }
.g-common .body { padding-left: 8px; gap: 11px; }
.g-edit { width: 237px; }
.g-edit .body { padding-left: 9px; gap: 11px; }
.g-draw { width: 119px; }
.g-draw .body { padding-left: 5px; gap: 3px; }
.g-draw .icons { padding-left: 1px; }
.g-second { width: 142px; }
.g-second .body { padding-left: 6px; gap: 5px; }

/* option bar */
.options {
  display: flex;
  align-items: center;
  flex: none;
  gap: 5px;
  height: 29px;
  padding-left: 3px;
  background: #c9ccd1;
  border-bottom: 1px solid #8e9297;
  overflow: hidden;
  white-space: nowrap;
}
.sel { position: relative; width: 100px; height: 23px; flex: none; }
.sel select {
  appearance: none;
  width: 100%;
  height: 100%;
  padding: 0 3px;
  background: #fff;
  border: 1px solid #9a9da2;
  border-radius: 0;
}
.sel::after {
  content: "";
  position: absolute;
  right: 5px;
  top: 10px;
  border: 3px solid transparent;
  border-top: 4px solid #555;
  border-bottom: 0;
}
.sel.short { width: 56px; }
input[type="checkbox"] {
  appearance: none;
  width: 14px;
  height: 14px;
  background: #fff;
  border: 1px solid #777;
  border-radius: 2px;
}
.chk { display: flex; align-items: center; gap: 7px; padding: 0 1px; flex: none; }
.field { display: flex; align-items: center; flex: none; }
.field.dim, .unit { color: #777; }
.field input { width: 79px; height: 21px; border: 0; padding: 0 3px; background: #fff; color: #444; }
.spin { position: relative; }
.field.spin input { width: 62px; height: 22px; border: 1px solid #aaa; color: #999; }
.arrows::before, .arrows::after {
  content: "";
  position: absolute;
  right: 4px;
  border: 3px solid transparent;
}
.arrows::before { top: 5px; border-top: 0; border-bottom: 4px solid #555; }
.arrows::after { bottom: 5px; border-bottom: 0; border-top: 4px solid #555; }
.unit { margin-left: -4px; }

/* work area */
.work { display: flex; flex: 1; min-height: 0; }
.palette {
  width: 139px;
  flex: none;
  display: flex;
  flex-direction: column;
  border: solid #bfc2c7;
  border-width: 0 1px;
}
.palette-bar {
  display: flex;
  align-items: center;
  gap: 4px;
  height: 28px;
  padding: 0 3px 2px 5px;
  background: #f0f0f0;
  border-bottom: 1px solid #c9ccd1;
}
.plus { margin-right: auto; }
.view {
  display: grid;
  place-items: center;
  width: 25px;
  height: 24px;
  border: 1px solid #5aa8f6;
  border-radius: 3px;
  background: #dcebfb;
}
.palette-body { display: flex; flex: 1; min-height: 0; overflow: hidden; }
.tree { flex: 1; padding-top: 4px; display: flex; flex-direction: column; }
.tree li { display: flex; align-items: center; gap: 3px; height: 24px; padding-left: 5px; white-space: nowrap; flex: none; }
.tree svg { width: 16px; height: 14px; }
.tree .sub { margin: 1px 0 1px 20px; padding-left: 4px; gap: 6px; height: 22px; }
.tree .sub svg { width: 16px; height: 16px; }
.tree .on { background: #c9d9ef; }
.scroll { width: 8px; margin: 15px 5px 28px 4px; background: #c6c6c6; border-radius: 4px; }

.docks { display: flex; flex-direction: column; gap: 4px; width: 319px; margin-left: 4px; flex: none; min-height: 0; }
.dock { display: flex; flex-direction: column; border: 1px solid #c2c5ca; background: #fff; min-height: 0; }
.dock.list { height: 278px; flex: none; border-top: 0; }
.dock.props { flex: 1; border-bottom: 0; border-top: 0; }
.grip { display: flex; justify-content: flex-end; height: 12px; padding-right: 4px; background: #d0d3d8; flex: none; }
.grip button { font-size: 14px; line-height: 12px; color: #555; }
.dock-tabs { display: flex; height: 22px; background: #eee; border-bottom: 1px solid #c9ccd1; flex: none; }
.dock-tabs button { width: 65px; background: #dedede; color: #777; border-right: 1px solid #c9ccd1; }
.dock-tabs .on { background: #f0f0f0; color: #111; font-weight: 500; }
.tools { display: flex; align-items: center; height: 30px; padding: 0 1px 0 4px; gap: 13px; background: #f0f0f0; border-bottom: 1px solid #c9ccd1; color: #333; flex: none; }
.tools button { display: flex; align-items: center; gap: 3px; }
.tools svg { width: 16px; height: 16px; }
.tools .tri { margin-left: 3px; }
.tools .more { margin-left: auto; }
.tools .more svg { width: 8px; height: 8px; }
.search { display: flex; align-items: center; height: 19px; padding-right: 5px; border-bottom: 1px solid #c9ccd1; flex: none; }
.search input { flex: 1; min-width: 0; height: 17px; border: 0; padding: 0 3px; outline: 0; }
.search input::placeholder { color: #777; }
.search svg { width: 12px; height: 12px; }
.items li { display: flex; align-items: center; gap: 7px; height: 21px; }
.l1 { padding-left: 10px; }
.l2 { padding-left: 30px; }
.l3 { padding-left: 60px; }
.l3 span { background: #c9d9ef; line-height: 21px; padding: 0 5px 0 6px; }
.open { width: 0; height: 0; border-left: 6px solid transparent; border-bottom: 6px solid #333; }

table { width: 100%; table-layout: fixed; border-collapse: separate; border-spacing: 0; flex: none; }
.c-no { width: 22px; }
.c-name { width: 144px; }
.c-add { width: 38px; }
th { padding: 0; font-weight: 400; background: #f0f0f0; color: #444; text-align: center; }
thead th { height: 20px; border-right: 1px solid #d5d7da; border-bottom: 1px solid #d5d7da; }
thead .corner { background: #fff; border: 0; }
tbody tr { height: 21px; }
td, tbody th { padding: 0 3px; border: solid #c2c5ca; border-width: 0 1px 1px 0; white-space: nowrap; overflow: hidden; line-height: 16px; }
tbody th { padding: 0; border-right: 0; border-bottom-color: #dcdee0; }
td:last-child, thead th:last-child { border-right: 0; }
.k { color: #1457e8; }
.ro { background: #eaeaea; color: #888; }
.a { text-align: center; padding: 0; }
.a input { display: block; margin: 0 auto; }
td button { width: 14px; height: 14px; margin-right: 6px; border: 1px solid #777; border-radius: 2px; background: #f0f0f0; line-height: 11px; font-size: 14px; vertical-align: middle; }
td.x { padding-left: 1px; }
.rest { flex: 1; background: linear-gradient(to right, #f0f0f0 22px, #fff 22px); }

.splitter { width: 4px; flex: none; display: flex; align-items: center; background: #fff; }
.splitter button { display: grid; place-items: center; width: 4px; height: 100px; margin-top: 70px; background: #5c6672; }
.splitter svg { width: 4px; height: 8px; }
.canvas { flex: 1; min-width: 0; background: #000; overflow: hidden; }
.crisp { shape-rendering: crispEdges; fill: none; }
.cad { fill: #fff; font: 17px/1 "Noto Sans CJK SC", sans-serif; }
.bub { text-anchor: middle; font-size: 18px; }

/* callout arrows drawn across the whole window */
.arrows-layer { position: absolute; left: 0; top: 0; pointer-events: none; }
```
